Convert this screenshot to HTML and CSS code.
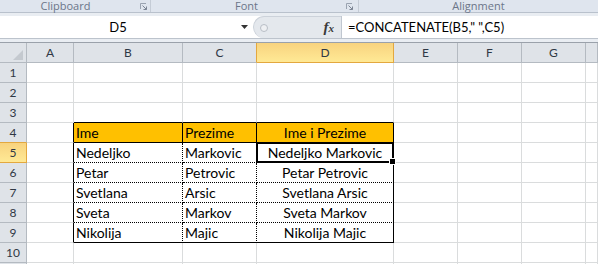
FILE: index.html
```html
<!DOCTYPE html>
<html>
<head>
<meta charset="utf-8">
<link rel="stylesheet" href="styles.css">
</head>
<body>
<div class="ribbon">
  <div class="group g1"><span class="glabel">Clipboard</span><svg class="launch" width="7" height="7" viewBox="0 0 7 7"><path d="M0.5 6V0.5H6" fill="none" stroke="#9aa3b0"/><path d="M2.5 2.5L6.5 6.5M6.5 3.5V6.5H3.5" fill="none" stroke="#7c8594"/></svg></div>
  <div class="group g2"><span class="glabel">Font</span><svg class="launch" width="7" height="7" viewBox="0 0 7 7"><path d="M0.5 6V0.5H6" fill="none" stroke="#9aa3b0"/><path d="M2.5 2.5L6.5 6.5M6.5 3.5V6.5H3.5" fill="none" stroke="#7c8594"/></svg></div>
  <div class="group g3"><span class="glabel">Alignment</span></div>
</div>
<div class="fwrap">
  <div class="fbar">
    <div class="namebox"><span class="nametext">D5</span><svg class="arrow" width="7" height="4" viewBox="0 0 7 4"><path d="M0 0H7L3.5 4Z" fill="#333"/></svg></div>
    <div class="split"><span class="knob"></span><span class="fx">f<sub>x</sub></span></div>
    <div class="finput">=CONCATENATE(B5," ",C5)</div>
  </div>
</div>
<div class="sheet">
  <div class="c hdr corner"><span class="tri"></span></div>
  <div class="c hdr">A</div>
  <div class="c hdr">B</div>
  <div class="c hdr pre">C</div>
  <div class="c hdr sel">D</div>
  <div class="c hdr">E</div>
  <div class="c hdr">F</div>
  <div class="c hdr">G</div>
  <div class="c hdr"></div>

  <div class="c hdr">1</div>
  <div class="c"></div><div class="c"></div><div class="c"></div><div class="c"></div><div class="c"></div><div class="c"></div><div class="c"></div><div class="c"></div>

  <div class="c hdr">2</div>
  <div class="c"></div><div class="c"></div><div class="c"></div><div class="c"></div><div class="c"></div><div class="c"></div><div class="c"></div><div class="c"></div>

  <div class="c hdr">3</div>
  <div class="c"></div><div class="c tt"></div><div class="c tt"></div><div class="c tt"></div><div class="c"></div><div class="c"></div><div class="c"></div><div class="c"></div>

  <div class="c hdr pre-r">4</div>
  <div class="c tl"></div>
  <div class="c th">Ime</div>
  <div class="c th">Prezime</div>
  <div class="c th ctr">Ime i Prezime</div>
  <div class="c"></div><div class="c"></div><div class="c"></div><div class="c"></div>

  <div class="c hdr sel-r">5</div>
  <div class="c tl"></div>
  <div class="c td">Nedeljko</div>
  <div class="c td">Markovic</div>
  <div class="c td lc ctr active-host">Nedeljko Markovic<span class="active"><span class="handle"></span></span></div>
  <div class="c"></div><div class="c"></div><div class="c"></div><div class="c"></div>

  <div class="c hdr">6</div>
  <div class="c tl"></div>
  <div class="c td">Petar</div>
  <div class="c td">Petrovic</div>
  <div class="c td lc ctr">Petar Petrovic</div>
  <div class="c"></div><div class="c"></div><div class="c"></div><div class="c"></div>

  <div class="c hdr">7</div>
  <div class="c tl"></div>
  <div class="c td">Svetlana</div>
  <div class="c td">Arsic</div>
  <div class="c td lc ctr">Svetlana Arsic</div>
  <div class="c"></div><div class="c"></div><div class="c"></div><div class="c"></div>

  <div class="c hdr">8</div>
  <div class="c tl"></div>
  <div class="c td">Sveta</div>
  <div class="c td">Markov</div>
  <div class="c td lc ctr">Sveta Markov</div>
  <div class="c"></div><div class="c"></div><div class="c"></div><div class="c"></div>

  <div class="c hdr">9</div>
  <div class="c tl"></div>
  <div class="c td lr">Nikolija</div>
  <div class="c td lr">Majic</div>
  <div class="c td lc lr ctr">Nikolija Majic</div>
  <div class="c"></div><div class="c"></div><div class="c"></div><div class="c"></div>

  <div class="c hdr">10</div>
  <div class="c"></div><div class="c"></div><div class="c"></div><div class="c"></div><div class="c"></div><div class="c"></div><div class="c"></div><div class="c"></div>

  <div class="c hdr"></div>
  <div class="c"></div><div class="c"></div><div class="c"></div><div class="c"></div><div class="c"></div><div class="c"></div><div class="c"></div><div class="c"></div>
</div>
</body>
</html>
```
FILE: styles.css
```css
* { box-sizing: border-box; margin: 0; padding: 0; }
html, body { overflow: hidden; }
body {
  margin: 0;
  width: 598px;
  height: 264px;
  background: #fff;
  font-family: Lato, "Liberation Sans", sans-serif;
}

/* ribbon group labels */
.ribbon {
  display: flex;
  height: 13px;
  background: #dfe5ee;
  border-bottom: 1px solid #b9c1cc;
  font-family: "Open Sans", "DejaVu Sans", sans-serif;
  font-size: 11px;
  color: #6b7589;
}
.group {
  display: flex;
  align-items: center;
  border-right: 1px solid #c5ccd6;
}
.g1 { width: 151px; }
.g2 { width: 208px; }
.g3 { flex: 1; border-right: 0; }
.glabel {
  flex: 1;
  text-align: center;
  line-height: 11px;
  align-self: flex-start;
}
.g1 .glabel { padding-right: 9px; }
.g2 .glabel { padding-right: 4px; }
.launch { margin-right: 3px; margin-top: 1px; }
.g2 .launch { margin-right: 5px; }

/* formula bar */
.fwrap {
  height: 29px;
  background: #e9edf2;
  padding-top: 3px;
}
.fbar {
  display: flex;
  height: 23px;
  background: #fff;
  border-bottom: 1px solid #bcc3cc;
  font-size: 13px;
  color: #000;
}
.namebox {
  width: 251px;
  display: flex;
  align-items: center;
}
.nametext {
  flex: 1;
  text-align: center;
  padding-right: 5px;
}
.arrow { margin-right: 3px; }
.split {
  width: 88px;
  margin-left: 2px;
  background: #e4e8ed;
  border-radius: 11px 0 0 11px;
  border: 1px solid #ccd2da;
  border-right: 0;
  border-bottom: 0;
  display: flex;
  align-items: center;
  padding-left: 6px;
}
.knob {
  width: 8px;
  height: 8px;
  border-radius: 50%;
  background: #eef0f3;
  border: 1px solid #b8bec6;
}
.fx {
  margin-left: auto;
  margin-right: 7px;
  font-family: "Liberation Serif", serif;
  font-style: italic;
  font-weight: bold;
  font-size: 15px;
  color: #3a3a3a;
  line-height: 14px;
}
.fx sub {
  font-size: 11px;
  vertical-align: 0;
}
.finput {
  flex: 1;
  border-left: 1px solid #c0c7d0;
  padding-left: 6px;
  display: flex;
  align-items: center;
  white-space: nowrap;
}

/* sheet */
.sheet {
  display: grid;
  grid-template-columns: 27px 47px 109px 74px 137px 64px 64px 64px 1fr;
  grid-template-rows: repeat(12, 20px);
  border-top: 1px solid #9aa1aa;
}
.c {
  border-right: 1px solid #dadcdd;
  border-bottom: 1px solid #dadcdd;
  display: flex;
  align-items: flex-end;
  padding: 0 2px 1px;
  font-size: 14px;
  line-height: 17px;
  white-space: nowrap;
  color: #000;
  min-width: 0;
}
.hdr {
  background: #dfe3e8;
  border-right-color: #b4bac1;
  border-bottom-color: #b4bac1;
  color: #2f3845;
  font-size: 12px;
  align-items: center;
  justify-content: center;
  padding: 0;
}
.corner {
  align-items: flex-end;
  justify-content: flex-end;
  padding: 0 3px 2px 0;
}
.tri {
  width: 0;
  height: 0;
  border-left: 10px solid transparent;
  border-bottom: 10px solid #c4c9cf;
}
.pre { border-right-color: #e3a83f; }
.pre-r { border-bottom-color: #e3a83f; }
.sel,
.sel-r {
  background: linear-gradient(#f8d37f, #ffe995);
  border-right-color: #e3a83f;
  border-bottom-color: #e3a83f;
}

/* table */
.tt { border-bottom-color: #000; }
.tl { border-right-color: #000; }
.th {
  background: #ffc000;
  border-right: 1px solid #000;
  border-bottom: 1px solid #000;
}
.td {
  border-right: 1px dotted #000;
  border-bottom: 1px dotted #000;
}
.td.lc { border-right-style: solid; }
.td.lr { border-bottom-style: solid; }
.ctr { justify-content: center; }

.active-host { position: relative; overflow: visible; }
.active {
  position: absolute;
  top: -1px;
  left: -1px;
  right: -1px;
  bottom: -1px;
  border: 2px solid #000;
}
.handle {
  position: absolute;
  right: -4px;
  bottom: -4px;
  width: 7px;
  height: 7px;
  background: #000;
  border: 1px solid #fff;
}
```
